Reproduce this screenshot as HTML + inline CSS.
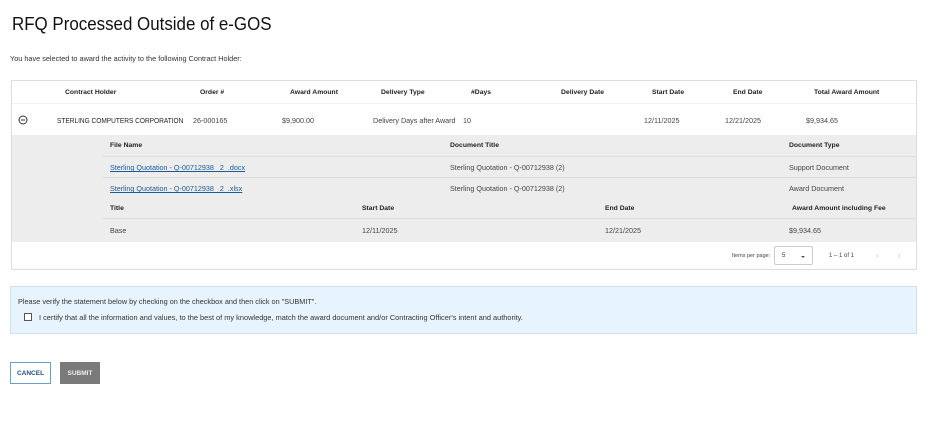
<!DOCTYPE html>
<html><head><meta charset="utf-8"><style>
*{margin:0;padding:0;box-sizing:border-box}
body{width:929px;height:422px;background:#fff;font-family:"Liberation Sans",Arial,sans-serif;color:#333;position:relative;overflow:hidden}
.a{position:absolute;white-space:nowrap}
.h{font-size:6.8px;font-weight:bold;color:#222}
.t{font-size:7.2px;color:#444}
.l{font-size:7.2px;color:#1a5a9a;text-decoration:underline}
</style></head><body>
<div class="a" style="left:12px;top:14px;font-size:18px;color:#111;transform:scaleX(0.94);transform-origin:left top">RFQ Processed Outside of e-GOS</div>
<div class="a t" style="left:10px;top:54px;color:#333;font-size:7.3px">You have selected to award the activity to the following Contract Holder:</div>

<div class="a" style="left:11px;top:80px;width:906px;height:190px;border:1px solid #ddd;background:#fff"></div>
<div class="a" style="left:12px;top:103px;width:904px;height:1px;background:#f0f0f0"></div>
<div class="a" style="left:12px;top:135px;width:904px;height:107px;background:#ededed"></div>
<div class="a" style="left:103px;top:156px;width:813px;height:1px;background:#dcdcdc"></div>
<div class="a" style="left:103px;top:177px;width:813px;height:1px;background:#dcdcdc"></div>
<div class="a" style="left:103px;top:218px;width:813px;height:1px;background:#dcdcdc"></div>

<div class="a h" style="left:65px;top:89px">Contract Holder</div>
<div class="a h" style="left:200px;top:89px">Order #</div>
<div class="a h" style="left:290px;top:89px">Award Amount</div>
<div class="a h" style="left:381px;top:89px">Delivery Type</div>
<div class="a h" style="left:471px;top:89px">#Days</div>
<div class="a h" style="left:561px;top:89px">Delivery Date</div>
<div class="a h" style="left:652px;top:89px">Start Date</div>
<div class="a h" style="left:733px;top:89px">End Date</div>
<div class="a h" style="left:814px;top:89px">Total Award Amount</div>

<svg class="a" style="left:18px;top:115px" width="10" height="10" viewBox="0 0 10 10"><circle cx="5" cy="5" r="4" fill="none" stroke="#333" stroke-width="1"/><line x1="3" y1="5" x2="7" y2="5" stroke="#333" stroke-width="1"/></svg>
<div class="a t" style="left:57px;top:116px;color:#222;font-size:7.2px;transform:scaleX(0.91);transform-origin:left top">STERLING COMPUTERS CORPORATION</div>
<div class="a t" style="left:193px;top:116px">26-000165</div>
<div class="a t" style="left:282px;top:116px">$9,900.00</div>
<div class="a t" style="left:373px;top:116px">Delivery Days after Award</div>
<div class="a t" style="left:463px;top:116px">10</div>
<div class="a t" style="left:644px;top:116px">12/11/2025</div>
<div class="a t" style="left:725px;top:116px">12/21/2025</div>
<div class="a t" style="left:806px;top:116px">$9,934.65</div>

<div class="a h" style="left:110px;top:142px">File Name</div>
<div class="a h" style="left:450px;top:142px">Document Title</div>
<div class="a h" style="left:789px;top:142px">Document Type</div>
<div class="a l" style="left:110px;top:163px">Sterling Quotation - Q-00712938 _2_.docx</div>
<div class="a t" style="left:450px;top:163px">Sterling Quotation - Q-00712938 (2)</div>
<div class="a t" style="left:789px;top:163px">Support Document</div>
<div class="a l" style="left:110px;top:184px">Sterling Quotation - Q-00712938 _2_.xlsx</div>
<div class="a t" style="left:450px;top:184px">Sterling Quotation - Q-00712938 (2)</div>
<div class="a t" style="left:789px;top:184px">Award Document</div>
<div class="a h" style="left:110px;top:205px">Title</div>
<div class="a h" style="left:362px;top:205px">Start Date</div>
<div class="a h" style="left:605px;top:205px">End Date</div>
<div class="a h" style="left:792px;top:205px">Award Amount including Fee</div>
<div class="a t" style="left:110px;top:226px">Base</div>
<div class="a t" style="left:362px;top:226px">12/11/2025</div>
<div class="a t" style="left:605px;top:226px">12/21/2025</div>
<div class="a t" style="left:789px;top:226px">$9,934.65</div>

<div class="a" style="left:732px;top:253px;font-size:5.5px;color:#444">Items per page:</div>
<div class="a" style="left:774px;top:246px;width:39px;height:19px;border:1px solid #ccc;border-radius:2px"></div>
<div class="a" style="left:782px;top:253px;font-size:6px;color:#333">5</div>
<div class="a" style="left:801px;top:256px;width:0;height:0;border-left:2.5px solid transparent;border-right:2.5px solid transparent;border-top:2.5px solid #555"></div>
<div class="a" style="left:829px;top:253px;font-size:6px;color:#444">1 – 1 of 1</div>
<div class="a" style="left:876px;top:251px;font-size:8px;color:#bbb">‹</div>
<div class="a" style="left:898px;top:251px;font-size:8px;color:#bbb">›</div>

<div class="a" style="left:10px;top:286px;width:907px;height:48px;background:#e8f4fd;border:1px solid #cfe0ee"></div>
<div class="a" style="left:18px;top:297px;font-size:7.3px;color:#333">Please verify the statement below by checking on the checkbox and then click on "SUBMIT".</div>
<div class="a" style="left:24px;top:313px;width:8px;height:8px;border:1px solid #555;background:#fff"></div>
<div class="a" style="left:39px;top:313px;font-size:7.4px;color:#333">I certify that all the information and values, to the best of my knowledge, match the award document and/or Contracting Officer's intent and authority.</div>

<div class="a" style="left:10px;top:362px;width:41px;height:22px;border:1px solid #6a9fcc;font-size:6.5px;font-weight:bold;color:#1a4f80;text-align:center;line-height:22px">CANCEL</div>
<div class="a" style="left:60px;top:362px;width:40px;height:22px;background:#7a7a7a;font-size:6.5px;font-weight:bold;color:#eee;text-align:center;line-height:23px">SUBMIT</div>
</body></html>
